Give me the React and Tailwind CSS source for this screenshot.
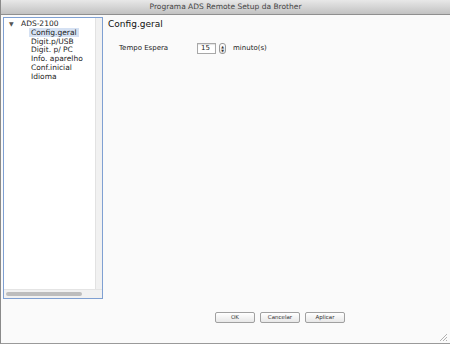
import React from 'react';

const items = ['Config.geral', 'Digit.p/USB', 'Digit. p/ PC', 'Info. aparelho', 'Conf.inicial', 'Idioma'];

const Btn = ({ label }) => (
  <div className="w-[40px] h-[11px] rounded-[2px] border border-[#a0a0a0] bg-gradient-to-b from-white to-[#e8e8e8] flex items-center justify-center text-[5.5px] leading-none text-[#333]">
    {label}
  </div>
);

export default function App() {
  return (
    <div className="w-[450px] h-[344px] bg-[#fafafa] flex flex-col border-l border-[#8a8a8a] border-b border-b-[#9a9a9a] font-['Lucida_Grande','DejaVu_Sans',sans-serif] overflow-hidden">
      <div className="h-[15px] shrink-0 bg-gradient-to-b from-[#e8e8e8] to-[#c2c2c2] border-b border-[#8f8f8f] flex items-center justify-center text-[7.5px] text-[#444]">
        Programa ADS Remote Setup da Brother
      </div>
      <div className="flex flex-1 min-h-0 pt-[2px]">
        <div className="ml-[2px] w-[100px] h-[282px] border border-[#7fa0d2] bg-white flex flex-col">
          <div className="flex flex-1 min-h-0">
            <div className="flex-1 pt-[2px] text-[7.5px] leading-[8.8px] text-[#222]">
              <div className="flex items-center pl-[5px]">
                <span className="text-[6px] text-[#555] w-[12px]">▼</span>
                <span>ADS-2100</span>
              </div>
              {items.map((t, i) => (
                <div key={t} className="pl-[27px]">
                  <span className={i === 0 ? 'bg-[#d5e1f3] px-[2px] -ml-[2px]' : ''}>{t}</span>
                </div>
              ))}
            </div>
            <div className="w-[7px] bg-[#f1f1f1] border-l border-[#e2e2e2]" />
          </div>
          <div className="h-[9px] bg-[#f1f1f1] border-t border-[#e4e4e4] flex items-center pl-[2px] pr-[16px]">
            <div className="h-[4px] w-[76px] rounded-full bg-[#bdbdbd]" />
          </div>
        </div>
        <div className="flex-1 flex flex-col pl-[5px] relative">
          <div className="text-[9px] text-[#111] pt-[1px] leading-[12px]">Config.geral</div>
          <div className="flex items-center mt-[13px] ml-[11px] text-[7px] text-[#222]">
            <span className="w-[78px]">Tempo Espera</span>
            <div className="w-[19px] h-[11px] border border-[#a8a8a8] bg-white flex items-center pl-[3px] text-[7px] leading-none shadow-[inset_0_1px_1px_rgba(0,0,0,0.12)]">15</div>
            <div className="ml-[3px] w-[7px] h-[11px] rounded-[3px] border border-[#9a9a9a] bg-gradient-to-b from-white to-[#e4e4e4] flex flex-col items-center justify-center text-[3.5px] leading-[4px] text-[#333]">
              <span>▲</span>
              <span>▼</span>
            </div>
            <span className="ml-[7px]">minuto(s)</span>
          </div>
          <div className="flex-1" />
          <div className="flex gap-[5px] ml-[107px] mb-[20px]">
            <Btn label="OK" />
            <Btn label="Cancelar" />
            <Btn label="Aplicar" />
          </div>
          <svg className="absolute right-[2px] bottom-[1px]" width="9" height="9" viewBox="0 0 9 9">
            <line x1="1" y1="8" x2="8" y2="1" stroke="#a0a0a0" strokeWidth="0.8" />
            <line x1="4" y1="8" x2="8" y2="4" stroke="#a0a0a0" strokeWidth="0.8" />
            <line x1="7" y1="8" x2="8" y2="7" stroke="#a0a0a0" strokeWidth="0.8" />
          </svg>
        </div>
      </div>
    </div>
  );
}
